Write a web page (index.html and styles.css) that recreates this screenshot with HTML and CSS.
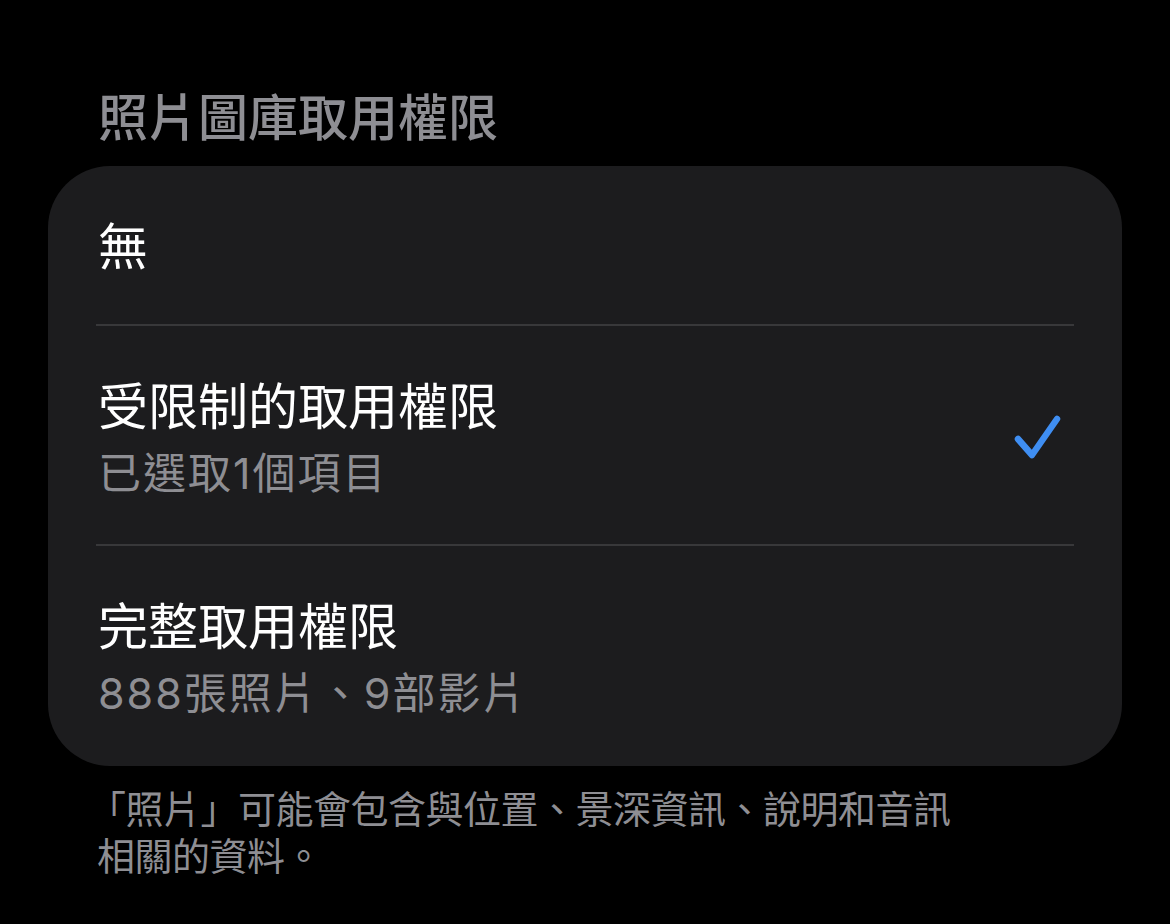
FILE: index.html
```html
<!DOCTYPE html>
<html lang="zh-Hant">
<head>
<meta charset="utf-8">
<link rel="stylesheet" href="styles.css">
</head>
<body>
<main class="page">
  <h1 class="section-title">照片圖庫取用權限</h1>
  <div class="card">
    <div class="row row-single">
      <div class="row-text">
        <div class="row-title">無</div>
      </div>
    </div>
    <div class="sep"></div>
    <div class="row">
      <div class="row-text">
        <div class="row-title">受限制的取用權限</div>
        <div class="row-sub">已選取1個項目</div>
      </div>
      <svg class="check" width="52" height="52" viewBox="0 0 52 52" aria-hidden="true">
        <path d="M6 27 L20 43 L45 7" fill="none" stroke="#3f8ef2" stroke-width="6.5" stroke-linecap="round" stroke-linejoin="round"/>
      </svg>
    </div>
    <div class="sep"></div>
    <div class="row row-last">
      <div class="row-text">
        <div class="row-title">完整取用權限</div>
        <div class="row-sub">888張照片、9部影片</div>
      </div>
    </div>
  </div>
  <p class="footer">「照片」可能會包含與位置、景深資訊、說明和音訊<br>相關的資料。</p>
</main>
</body>
</html>
```

FILE: styles.css
```css
html, body {
  margin: 0;
  padding: 0;
  background: #000;
}
body {
  font-family: Inter, "Noto Sans CJK TC", sans-serif;
  color: #fff;
}
.page {
  padding: 85px 48px 0 48px;
}
.section-title {
  margin: 0 0 0 50px;
  font-size: 50px;
  line-height: 66px;
  font-weight: 500;
  color: #8e8e93;
}
.card {
  margin-top: 15px;
  width: 1074px;
  background: #1c1c1e;
  border-radius: 62px;
  padding: 0 48px;
  box-sizing: border-box;
}
.row {
  display: flex;
  align-items: center;
  padding: 48px 0 38px 0;
}
.row-single {
  padding-bottom: 44px;
}
.row-last {
  padding-bottom: 40px;
}
.row-text {
  flex: 1;
  padding-left: 2px;
}
.row-title {
  font-size: 50px;
  line-height: 66px;
  font-weight: 400;
  color: #fff;
}
.row-sub {
  font-size: 43px;
  line-height: 66px;
  color: #8e8e93;
  letter-spacing: 2px;
}
.check {
  margin-right: 10px;
  margin-top: -4px;
}
.sep {
  height: 2px;
  background: #38383a;
}
.footer {
  margin: 17px 0 0 49px;
  font-family: "Noto Sans CJK TC", sans-serif;
  font-size: 38px;
  line-height: 47px;
  letter-spacing: -0.5px;
  text-indent: -9px;
  color: #8e8e93;
}
```
